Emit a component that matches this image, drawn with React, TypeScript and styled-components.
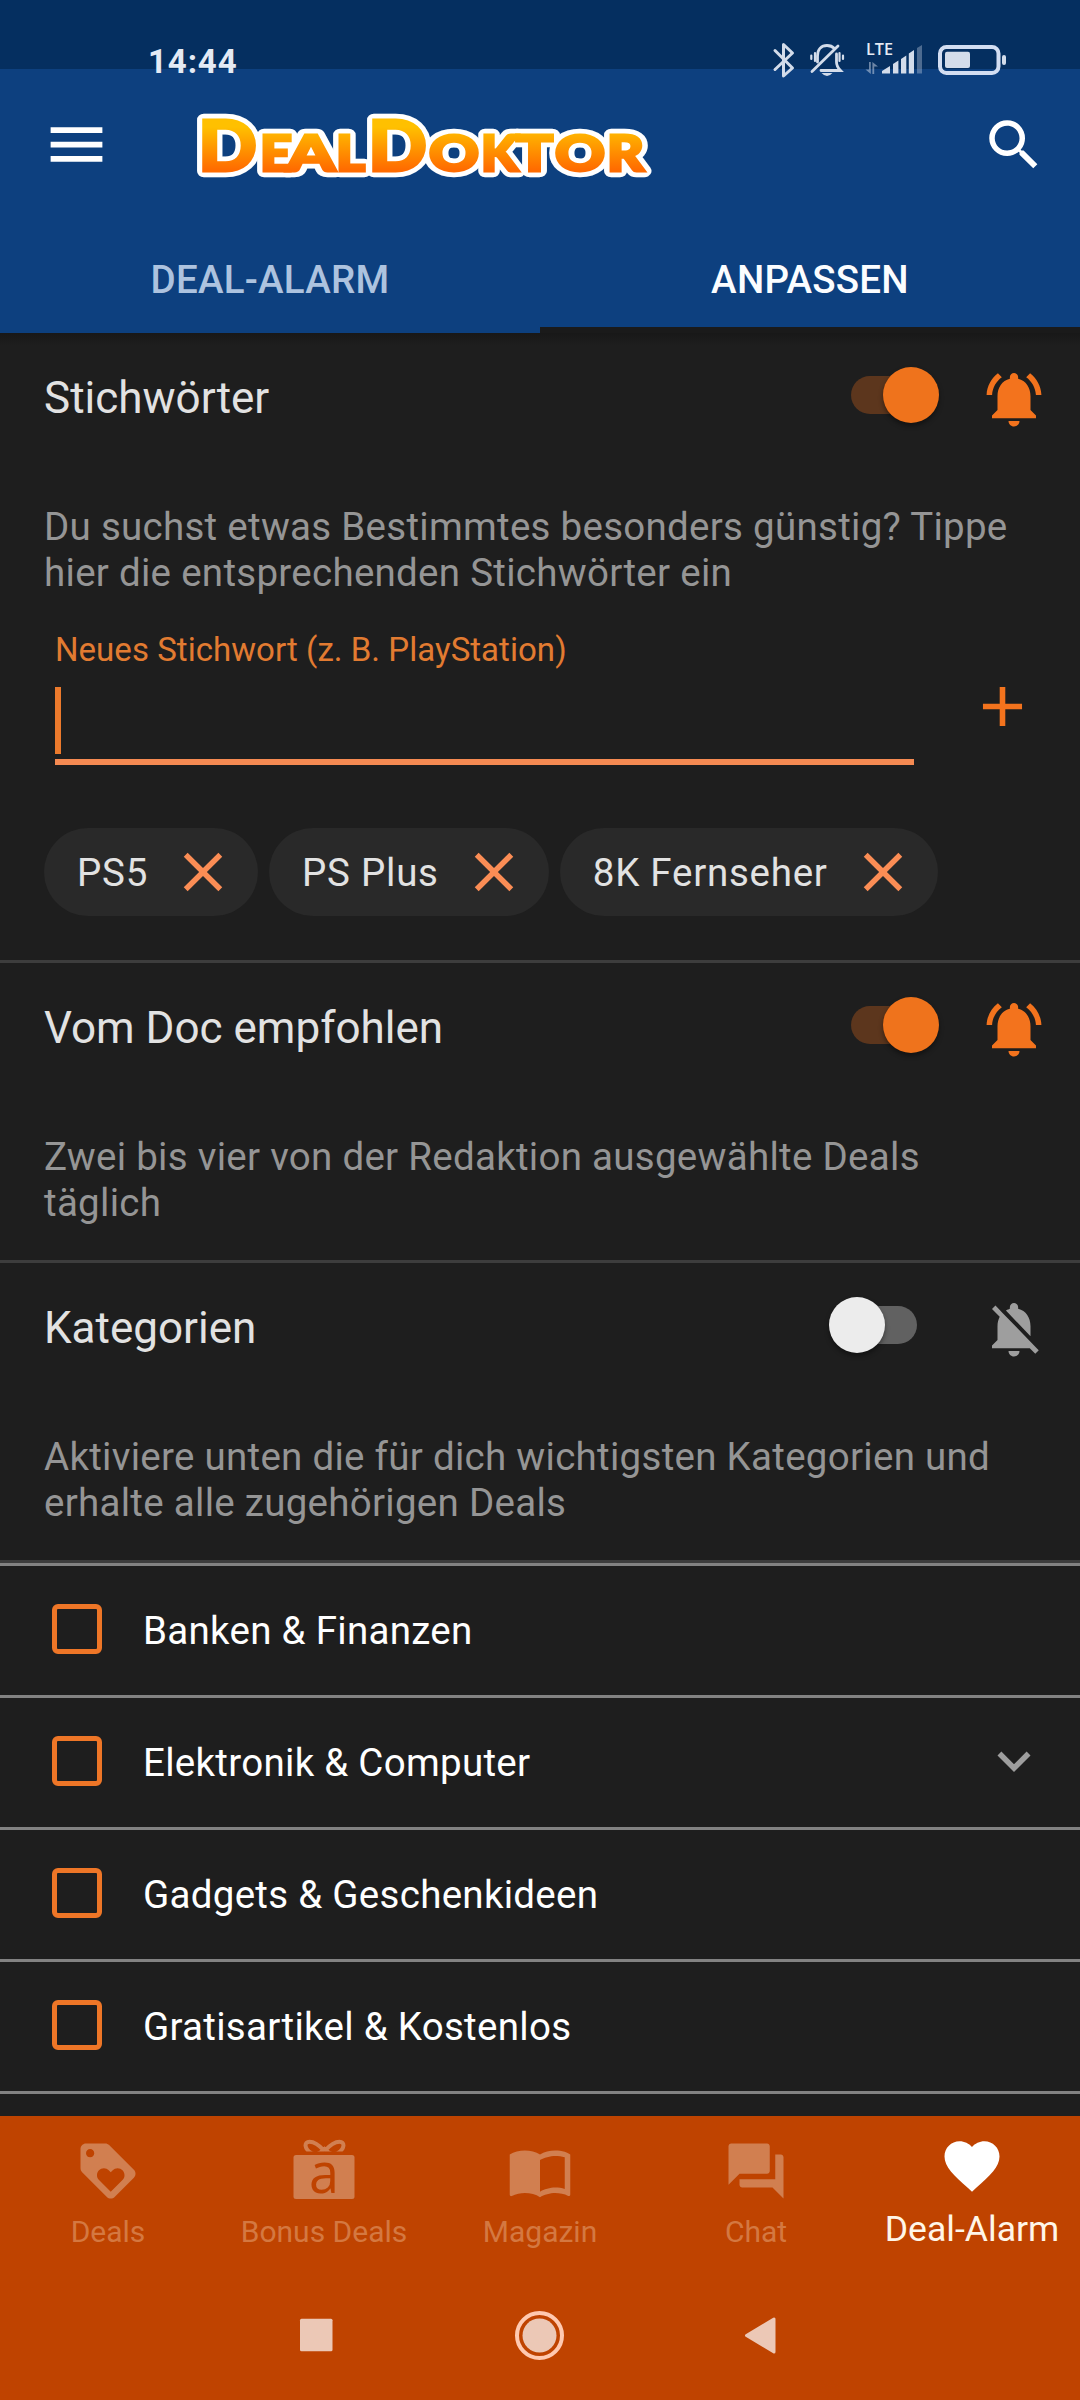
import React from 'react';
import styled, { createGlobalStyle } from 'styled-components';

const orange = '#f3731d';

const GlobalStyle = createGlobalStyle`
  * { box-sizing: border-box; }
  body { margin: 0; background: #1e1e1e; }
`;

const Screen = styled.div`
  width: 1080px;
  height: 2400px;
  overflow: hidden;
  display: flex;
  flex-direction: column;
  background: #1e1e1e;
  font-family: Roboto, sans-serif;
  color: #e2e2e2;
`;

const Header = styled.header`
  height: 333px;
  flex: none;
  display: flex;
  flex-direction: column;
  background: linear-gradient(#052f60 69px, #0d407f 69px);
`;

const StatusBar = styled.div`
  height: 85px;
  padding: 35px 72px 0 148px;
  display: flex;
  justify-content: space-between;
  align-items: center;
  color: #e4eaf4;
`;

const Clock = styled.span`
  font-size: 33px;
  line-height: 50px;
  font-weight: 700;
  letter-spacing: 0.9px;
  padding-top: 4px;
`;

const Toolbar = styled.div`
  height: 120px;
  padding: 0 33px 0 42px;
  display: flex;
  align-items: center;
`;

const MenuButton = styled.div`
  padding-bottom: 2px;
`;

const LogoSlot = styled.div`
  margin-left: 87px;
  padding-top: 6px;
  flex: 1;
  display: flex;
`;

const Tabs = styled.nav`
  flex: 1;
  display: grid;
  grid-template-columns: 1fr 1fr;
`;

const Tab = styled.div<{ $active?: boolean }>`
  display: flex;
  align-items: flex-start;
  justify-content: center;
  padding-top: 51px;
  font-size: 38.5px;
  line-height: 48px;
  font-weight: 500;
  letter-spacing: 0.25px;
  color: ${(p) => (p.$active ? '#fbfdff' : '#adc3df')};
  border-bottom: ${(p) => (p.$active ? '6px solid #1a1a1a' : 'none')};
`;

const Content = styled.main`
  height: 1783px;
  flex: none;
  overflow: hidden;
  background: linear-gradient(#181818, #1e1e1e 12px);
`;

const Section = styled.section<{ $height: number }>`
  height: ${(p) => p.$height}px;
  border-bottom: 3px solid #3d3d3d;
`;

const SectionHead = styled.div`
  height: 132px;
  padding: 0 33px 0 44px;
  display: flex;
  align-items: center;
`;

const SectionTitle = styled.h2`
  margin: -2px 0 0;
  flex: 1;
  font-size: 44px;
  line-height: 60px;
  font-weight: 400;
  color: #e2e2e2;
`;

const Description = styled.p`
  margin: 0;
  padding: 39px 44px 0;
  font-size: 38.5px;
  line-height: 46px;
  letter-spacing: 0.28px;
  color: #959595;
`;

const Track = styled.div<{ $on?: boolean }>`
  width: 66px;
  height: 38px;
  margin: -8px 64px 0 0;
  flex: none;
  display: flex;
  align-items: center;
  justify-content: ${(p) => (p.$on ? 'flex-end' : 'flex-start')};
  border-radius: 19px;
  background: ${(p) => (p.$on ? '#5c361d' : '#616161')};
`;

const Thumb = styled.div<{ $on?: boolean }>`
  width: 56px;
  height: 56px;
  flex: none;
  margin: 0 -22px;
  border-radius: 50%;
  background: ${(p) => (p.$on ? '#ef731c' : '#ececec')};
  box-shadow: 0 3px 5px rgba(0, 0, 0, 0.4);
`;

const EntryRow = styled.div`
  height: 135px;
  padding: 0 44px 0 55px;
  margin-top: 34px;
  display: flex;
`;

const Field = styled.div`
  width: 860px;
  border-bottom: 6px solid #f58a52;
  display: flex;
  flex-direction: column;
`;

const FieldLabel = styled.label`
  font-size: 33px;
  line-height: 40px;
  letter-spacing: 0.04px;
  color: #e27b31;
`;

const Caret = styled.span`
  width: 6px;
  height: 67px;
  margin-top: 17px;
  background: #ec7a2c;
`;

const AddButton = styled.div`
  margin: 43px 0 0 55px;
  width: 67px;
  height: 67px;
`;

const Chips = styled.div`
  display: flex;
  gap: 11px;
  padding: 63px 44px 0;
`;

const Chip = styled.div`
  height: 88px;
  padding: 0 22px 0 33px;
  display: flex;
  align-items: center;
  gap: 22px;
  border-radius: 44px;
  background: #292929;
  font-size: 38.5px;
  letter-spacing: 0.75px;
  color: #e2e2e2;
  white-space: nowrap;
`;

const CategoryList = styled.div`
  border-top: 3px solid #828282;
`;

const CategoryRow = styled.div`
  height: 132px;
  padding: 0 33px 3px 52px;
  display: flex;
  align-items: center;
  border-bottom: 3px solid #828282;
`;

const Checkbox = styled.span`
  width: 50px;
  height: 50px;
  border: 5.5px solid #ee7627;
  border-radius: 6px;
`;

const CategoryName = styled.span`
  flex: 1;
  margin-left: 41px;
  padding-top: 3px;
  font-size: 38.5px;
  line-height: 48px;
  letter-spacing: 0.29px;
  color: #ffffff;
`;

const BottomNav = styled.nav`
  height: 152px;
  flex: none;
  display: grid;
  grid-template-columns: repeat(5, 1fr);
  background: #bf4300;
`;

const NavItem = styled.div<{ $active?: boolean }>`
  display: flex;
  flex-direction: column;
  align-items: center;
  white-space: nowrap;
  padding-top: ${(p) => (p.$active ? 17 : 22)}px;
  color: ${(p) => (p.$active ? '#ffffff' : '#d17f50')};
`;

const NavLabel = styled.span<{ $active?: boolean }>`
  font-size: ${(p) => (p.$active ? 35.6 : 30)}px;
  line-height: 40px;
  margin-top: ${(p) => (p.$active ? 10 : 8)}px;
  color: ${(p) => (p.$active ? '#fff6e8' : '#d47841')};
`;

const SystemNav = styled.div`
  flex: 1;
  display: flex;
  align-items: flex-start;
  justify-content: center;
  gap: 171px;
  padding-top: 42px;
  background: #bf4300;
`;

const Glyph = styled.svg<{ $size?: number }>`
  width: ${(p) => p.$size ?? 66}px;
  height: ${(p) => p.$size ?? 66}px;
  flex: none;
  display: block;
  fill: currentColor;
  overflow: visible;
`;

const Plain = styled.svg`
  display: block;
  flex: none;
  overflow: visible;
`;

type IconProps = { d: string; size?: number; color?: string };
const Icon = ({ d, size, color }: IconProps) => (
  <Glyph viewBox="0 0 24 24" $size={size} color={color}>
    <path d={d} />
  </Glyph>
);

const paths = {
  menu: 'M3 18h18v-2H3v2zm0-5h18v-2H3v2zm0-7v2h18V6H3z',
  search:
    'M15.5 14h-.79l-.28-.27A6.471 6.471 0 0 0 16 9.5 6.5 6.5 0 1 0 9.5 16c1.61 0 3.09-.59 4.23-1.57l.27.28v.79l5 4.99L20.49 19l-4.99-5zm-6 0C7.01 14 5 11.99 5 9.5S7.01 5 9.5 5 14 7.01 14 9.5 11.99 14 9.5 14z',
  bellOn:
    'M7.58 4.08L6.15 2.65C3.75 4.48 2.17 7.3 2.03 10.5h2c.15-2.65 1.51-4.97 3.55-6.42zm12.39 6.42h2c-.15-3.2-1.73-6.02-4.12-7.85l-1.42 1.43c2.02 1.45 3.39 3.77 3.54 6.42zM18 11c0-3.07-1.64-5.64-4.5-6.32V4c0-.83-.67-1.5-1.5-1.5s-1.5.67-1.5 1.5v.68C7.63 5.36 6 7.92 6 11v5l-2 2v1h16v-1l-2-2v-5zm-6 11c1.1 0 2-.9 2-2h-4c0 1.1.9 2 2 2z',
  bellOff:
    'M20 18.69L7.84 6.14 5.27 3.49 4 4.76l2.8 2.8v.01c-.52.99-.8 2.16-.8 3.42v5l-2 2v1h13.73l2 2L21 19.72l-1-1.03zM12 22c1.11 0 2-.89 2-2h-4c0 1.11.89 2 2 2zm6-7.32V11c0-3.08-1.64-5.64-4.5-6.32V4c0-.83-.67-1.5-1.5-1.5s-1.5.67-1.5 1.5v.68c-.15.03-.29.08-.42.12-.1.03-.2.07-.3.11h-.01c-.01 0-.01 0-.02.01-.23.09-.46.2-.68.31 0 0-.01 0-.01.01L18 14.68z',
  add: 'M19 13h-6v6h-2v-6H5v-2h6V5h2v6h6v2z',
  close:
    'M19 6.41L17.59 5 12 10.59 6.41 5 5 6.41 10.59 12 5 17.59 6.41 19 12 13.41 17.59 19 19 17.59 13.41 12z',
  expand: 'M16.59 8.59L12 13.17 7.41 8.59 6 10l6 6 6-6z',
  tag: 'M21.41 11.58l-9-9C12.05 2.22 11.55 2 11 2H4c-1.1 0-2 .9-2 2v7c0 .55.22 1.05.59 1.42l9 9c.36.36.86.58 1.41.58.55 0 1.05-.22 1.41-.59l7-7c.37-.36.59-.86.59-1.41 0-.55-.23-1.06-.59-1.42zM5.500 7C4.67 7 4 6.33 4 5.5S4.67 4 5.5 4 7 4.67 7 5.5 6.33 7 5.5 7zm11.77 8.27L13 19.54l-4.27-4.27C8.28 14.81 8 14.19 8 13.5c0-1.38 1.12-2.5 2.5-2.5.69 0 1.32.28 1.77.74l.73.72.73-.73c.45-.45 1.08-.73 1.77-.73 1.38 0 2.5 1.12 2.5 2.5 0 .69-.28 1.32-.73 1.77z',
  book: 'M21 5c-1.11-.35-2.33-.5-3.5-.5-1.95 0-4.05.4-5.5 1.5-1.45-1.1-3.55-1.5-5.5-1.5S2.45 4.9 1 6v14.65c0 .25.25.5.5.5.1 0 .15-.05.25-.05C3.1 20.45 5.05 20 6.5 20c1.95 0 4.05.4 5.5 1.5 1.35-.85 3.8-1.5 5.5-1.5 1.65 0 3.35.3 4.75 1.05.1.05.15.05.25.05.25 0 .5-.25.5-.5V6c-.6-.45-1.25-.75-2-1zm0 13.5c-1.1-.35-2.3-.5-3.5-.5-1.7 0-4.15.65-5.5 1.5V8c1.35-.85 3.8-1.5 5.5-1.5 1.2 0 2.4.15 3.5.5v11.5z',
  chat: 'M21 6h-2v9H6v2c0 .55.45 1 1 1h11l4 4V7c0-.55-.45-1-1-1zm-4 6V3c0-.55-.45-1-1-1H3c-.55 0-1 .45-1 1v14l4-4h10c.55 0 1-.45 1-1z',
  heart:
    'M12 21.35l-1.45-1.32C5.4 15.36 2 12.28 2 8.5 2 5.42 4.42 3 7.5 3c1.74 0 3.41.81 4.5 2.09C13.09 3.81 14.76 3 16.5 3 19.58 3 22 5.42 22 8.5c0 3.78-3.4 6.86-8.55 11.54L12 21.35z',
};

/* letter, left edge, advance width, font size */
const logoLetters: [string, number, number, number][] = [
  ['D', 0, 59, 71],
  ['E', 62, 32, 49],
  ['A', 89, 48, 49],
  ['L', 138, 29, 49],
  ['D', 170, 59, 71],
  ['O', 231, 50, 49],
  ['K', 283, 37, 49],
  ['T', 318, 37, 49],
  ['O', 357, 50, 49],
  ['R', 409, 37, 49],
];

const Logo = () => {
  const letters = logoLetters.map(([ch, x, w, size], i) => (
    <text key={i} x={x} y={56.5} fontSize={size} textLength={w} lengthAdjust="spacingAndGlyphs">
      {ch}
    </text>
  ));
  return (
    <Plain width="454" height="68" viewBox="0 0 454 68" fontFamily="Lato, sans-serif" fontWeight={900}>
      <defs>
        <linearGradient id="gold" gradientUnits="userSpaceOnUse" x1="0" y1="5" x2="0" y2="58">
          <stop offset="0.15" stopColor="#ffc000" />
          <stop offset="0.95" stopColor="#ff6c00" />
        </linearGradient>
      </defs>
      <g fill="#fff" stroke="#fff" strokeWidth="12.500" strokeLinejoin="round">
        {letters}
      </g>
      <g fill="url(#gold)" stroke="url(#gold)" strokeWidth="3">
        {letters}
      </g>
    </Plain>
  );
};

const StatusIcons = () => (
  <Plain width="236" height="40" viewBox="772 40 236 40" fill="#d3dcea" fontFamily="'Open Sans', sans-serif">
    <path
      d="M775 50.5L792.5 68 783.5 76V44.5L792.5 53 775 69.5"
      fill="none"
      stroke="#d3dcea"
      strokeWidth="3"
      strokeLinecap="round"
      strokeLinejoin="round"
    />
    <g fill="none" stroke="#d3dcea" strokeWidth="2.8" strokeLinecap="round">
      <path d="M817.500 62V56C817.500 49 821.500 45.500 827 45.500C830 45.500 832.500 46.500 834.500 48.500M836.500 54V62C836.500 66 838 68 840.500 70.500H821" />
      <path d="M812 71.500L838 46" />
      <path d="M815 53V61M811.300 55.500V59M839.500 53V61M843 55.500V59" strokeWidth="2.2" />
    </g>
    <path d="M821.500 73H832.500Q827 79 821.500 73Z" />
    <text x="866" y="55.200" fontSize="15.500" fontWeight="600" textLength="27" lengthAdjust="spacingAndGlyphs" fill="#e4eaf4">
      LTE
    </text>
    <path d="M869 62H870.800V74L865.500 69.500H869ZM874.200 62V74H872.400V62L878 66.500H874.200Z" opacity="0.5" />
    <path d="M882 73.500V71L890 66V73.500ZM893 73.500V64L898.400 60.500V73.500ZM901 73.500V59L906.300 55.500V73.500ZM908.800 73.500V53.500L914 50V73.500Z" />
    <path d="M917 73.500V48L922 45V73.500Z" opacity="0.35" />
    <rect x="940" y="47" width="58.500" height="26" rx="6.500" fill="none" stroke="#d3def2" strokeWidth="4" />
    <rect x="945" y="51.700" width="25" height="16.300" rx="2" />
    <rect x="1002" y="55" width="4" height="10" rx="2" />
  </Plain>
);

const GiftIcon = () => (
  <Plain width="66" height="66" viewBox="0 0 66 66">
    <clipPath id="bow">
      <rect width="66" height="13.500" />
    </clipPath>
    <rect x="2.500" y="17" width="61" height="44" rx="2.500" fill="#d17f50" />
    <g clipPath="url(#bow)" fill="none" stroke="#d17f50" strokeWidth="4">
      <path d="M33.500 13C27 6 22 3.800 18.500 3.800C13 3.800 13 10.500 20 15C26 18 29 15 33.500 11C38 15 41 18 47 15C54 10.500 54 3.800 48.500 3.800C45 3.800 40 6 33.500 13" />
    </g>
    <text
      x="33"
      y="55"
      textAnchor="middle"
      fontFamily="'Open Sans', sans-serif"
      fontWeight="500"
      fontSize="57"
      textLength="30"
      lengthAdjust="spacingAndGlyphs"
      fill="#bf4300"
    >
      a
    </text>
  </Plain>
);

const Heading = ({ title, on }: { title: string; on?: boolean }) => (
  <SectionHead>
    <SectionTitle>{title}</SectionTitle>
    <Track $on={on}>
      <Thumb $on={on} />
    </Track>
    <Icon d={on ? paths.bellOn : paths.bellOff} color={on ? orange : '#9e9e9e'} />
  </SectionHead>
);

const keywords = ['PS5', 'PS Plus', '8K Fernseher'];
const categories = [
  { name: 'Banken & Finanzen' },
  { name: 'Elektronik & Computer', expandable: true },
  { name: 'Gadgets & Geschenkideen' },
  { name: 'Gratisartikel & Kostenlos' },
];

export default function App() {
  return (
    <Screen>
      <GlobalStyle />
      <Header>
        <StatusBar>
          <Clock>14:44</Clock>
          <StatusIcons />
        </StatusBar>
        <Toolbar>
          <MenuButton>
            <Icon d={paths.menu} size={69} color="#fff" />
          </MenuButton>
          <LogoSlot>
            <Logo />
          </LogoSlot>
          <Icon d={paths.search} color="#fff" />
        </Toolbar>
        <Tabs>
          <Tab>DEAL-ALARM</Tab>
          <Tab $active>ANPASSEN</Tab>
        </Tabs>
      </Header>
      <Content>
        <Section $height={630}>
          <Heading title="Stichwörter" on />
          <Description>
            Du suchst etwas Bestimmtes besonders günstig? Tippe
            <br />
            hier die entsprechenden Stichwörter ein
          </Description>
          <EntryRow>
            <Field>
              <FieldLabel>Neues Stichwort (z. B. PlayStation)</FieldLabel>
              <Caret />
            </Field>
            <AddButton>
              <Icon d={paths.add} size={67} color={orange} />
            </AddButton>
          </EntryRow>
          <Chips>
            {keywords.map((k) => (
              <Chip key={k}>
                {k}
                <Icon d={paths.close} color="#fb8d55" />
              </Chip>
            ))}
          </Chips>
        </Section>
        <Section $height={300}>
          <Heading title="Vom Doc empfohlen" on />
          <Description>
            Zwei bis vier von der Redaktion ausgewählte Deals
            <br />
            täglich
          </Description>
        </Section>
        <Section $height={300}>
          <Heading title="Kategorien" />
          <Description>
            Aktiviere unten die für dich wichtigsten Kategorien und
            <br />
            erhalte alle zugehörigen Deals
          </Description>
        </Section>
        <CategoryList>
          {categories.map((c) => (
            <CategoryRow key={c.name}>
              <Checkbox />
              <CategoryName>{c.name}</CategoryName>
              {c.expandable && <Icon d={paths.expand} color="#9e9e9e" />}
            </CategoryRow>
          ))}
        </CategoryList>
      </Content>
      <BottomNav>
        <NavItem>
          <Icon d={paths.tag} />
          <NavLabel>Deals</NavLabel>
        </NavItem>
        <NavItem>
          <GiftIcon />
          <NavLabel>Bonus Deals</NavLabel>
        </NavItem>
        <NavItem>
          <Icon d={paths.book} />
          <NavLabel>Magazin</NavLabel>
        </NavItem>
        <NavItem>
          <Icon d={paths.chat} />
          <NavLabel>Chat</NavLabel>
        </NavItem>
        <NavItem $active>
          <Icon d={paths.heart} />
          <NavLabel $active>Deal-Alarm</NavLabel>
        </NavItem>
      </BottomNav>
      <SystemNav>
        <Plain width="50" height="50" viewBox="0 0 50 50" fill="#ecc8b6">
          <rect x="6" y="8.800" width="32.500" height="32.500" rx="1.500" />
        </Plain>
        <Plain width="50" height="50" viewBox="0 0 50 50" fill="#ecc8b6">
          <circle cx="24.500" cy="25.500" r="17" />
          <circle cx="24.500" cy="25.500" r="22.500" fill="none" stroke="#ffc9b0" strokeWidth="4" />
        </Plain>
        <Plain width="50" height="50" viewBox="0 0 50 50" fill="#ecc8b6">
          <path d="M10.500 25.500L38 9V42Z" stroke="#ecc8b6" strokeWidth="3" strokeLinejoin="round" />
        </Plain>
      </SystemNav>
    </Screen>
  );
}
